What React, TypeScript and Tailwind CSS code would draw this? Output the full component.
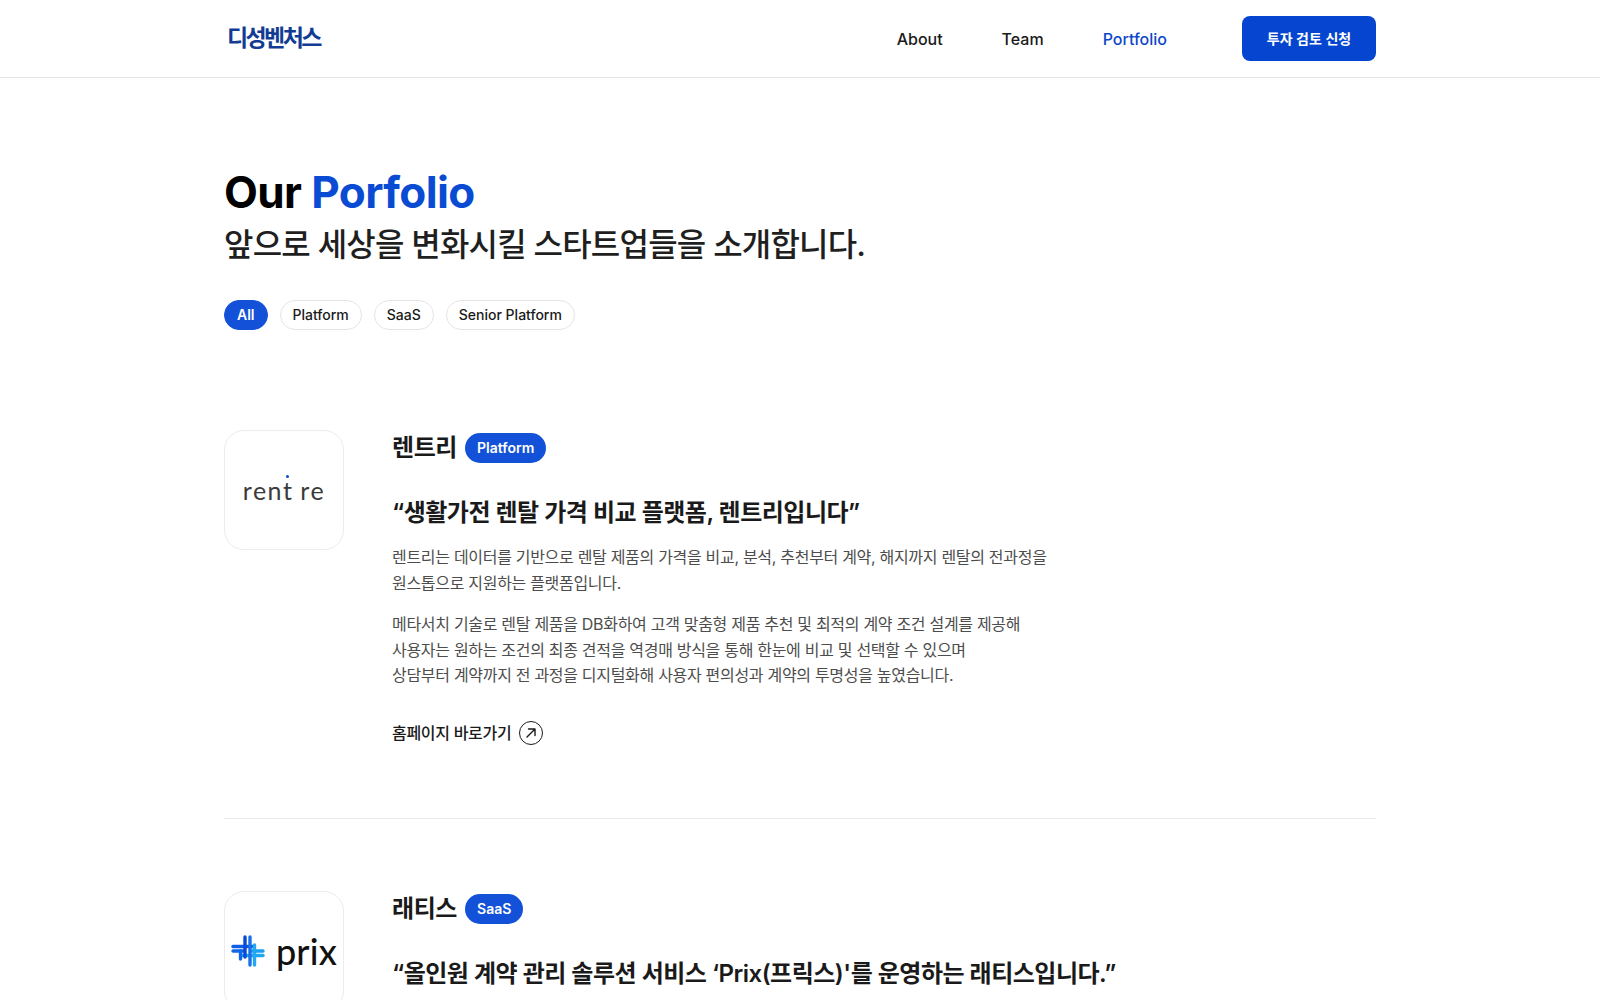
const FONT = "font-['Inter','Noto_Sans_CJK_KR','Noto_Sans',sans-serif]";

function Tag({ children }: { children: string }) {
  return (
    <span className="flex h-[30px] items-center rounded-full bg-[#1352d8] px-3 text-sm font-semibold text-white">
      {children}
    </span>
  );
}

function RentreLogo() {
  return (
    <div className="relative flex items-center text-[25px] leading-none tracking-[1.5px] text-[#3a3a3a] font-['Lato','sans-serif'] font-normal">
      <span>rent</span>
      <span className="relative ml-[7px]">re</span>
      <span className="absolute left-[43px] top-[-3px] size-[3px] rounded-full bg-[#0a46d0]" />
    </div>
  );
}

function PrixLogo() {
  return (
    <div className="flex items-center gap-[11px]">
      <svg width="34" height="32" viewBox="0 0 34 32" fill="none" strokeLinecap="round" strokeWidth="3.4">
        <defs>
          <linearGradient id="h" x1="0" x2="1" y1="0" y2="0">
            <stop offset="0" stopColor="#0a5be0" />
            <stop offset="1" stopColor="#22b8f5" />
          </linearGradient>
          <linearGradient id="v" x1="0" x2="0" y1="0" y2="1">
            <stop offset="0" stopColor="#0a49d6" />
            <stop offset="1" stopColor="#2aa6f2" />
          </linearGradient>
        </defs>
        <path d="M2 11.5H23" stroke="#0f5fe6" />
        <path d="M2 16H13" stroke="#1167ea" />
        <path d="M11 20.5H32" stroke="#1fa7f2" />
        <path d="M21 16H32" stroke="#1c9df0" />
        <path d="M14 2V22" stroke="#0a49d6" />
        <path d="M19 2V30" stroke="#1b6fe8" />
        <path d="M23.5 10V30" stroke="#22a8f3" />
        <path d="M9.5 16V24" stroke="#1167ea" />
      </svg>
      <span className="text-[36px] font-medium leading-none tracking-[0.2px] text-[#111] font-['Lato','sans-serif']">prix</span>
    </div>
  );
}

function Company({
  name,
  tag,
  logo,
  quote,
  paragraphs,
}: {
  name: string;
  tag: string;
  logo: React.ReactNode;
  quote: string;
  paragraphs: string[][];
}) {
  return (
    <article className="flex gap-12">
      <div className="flex size-[120px] shrink-0 items-center justify-center rounded-[20px] border border-[#ececec] bg-white">
        {logo}
      </div>
      <div className="min-w-0 flex-1">
        <div className="flex h-[36px] items-center gap-2">
          <h2 className="text-2xl font-bold tracking-[-0.4px] text-[#1a1a1a]">{name}</h2>
          <Tag>{tag}</Tag>
        </div>
        <p className="mt-[29px] h-[36px] text-[24px] font-semibold leading-[36px] tracking-[-0.5px] text-[#1a1a1a]">{quote}</p>
        <div className="mt-[14px] flex flex-col gap-4">
          {paragraphs.map((lines, i) => (
            <p key={i} className="text-base leading-[25.6px] tracking-[-0.3px] text-[#4d4d4d]">
              {lines.map((l) => (
                <span key={l} className="block">{l}</span>
              ))}
            </p>
          ))}
        </div>
        <a className="mt-[31px] flex h-[26px] items-center gap-2 text-base font-medium tracking-[-0.3px] text-[#1a1a1a]">
          홈페이지 바로가기
          <span className="flex size-6 items-center justify-center rounded-full border border-[#1a1a1a]">
            <svg width="12" height="12" viewBox="0 0 12 12" fill="none" stroke="#1a1a1a" strokeWidth="1.4" strokeLinecap="round" strokeLinejoin="round">
              <path d="M2 10L10 2M3.5 2H10V8.5" />
            </svg>
          </span>
        </a>
      </div>
    </article>
  );
}

export default function App() {
  const filters = ["All", "Platform", "SaaS", "Senior Platform"];
  return (
    <div className={`h-screen overflow-hidden bg-white ${FONT}`}>
      <header className="h-[78px] border-b border-[#e5e5e5]">
        <div className="mx-auto flex h-full max-w-[1152px] items-center">
          <span className="ml-[3px] text-[23px] font-bold leading-none tracking-[-2.6px] text-[#123c94]">디성벤처스</span>
          <nav className="ml-auto flex items-center gap-[59px] text-base font-medium text-[#1a1a1a]">
            <a>About</a>
            <a>Team</a>
            <a className="text-[#0d47c9]">Portfolio</a>
          </nav>
          <button className="ml-[75px] flex h-[45px] w-[134px] items-center justify-center rounded-lg bg-[#0545cf] text-sm font-semibold text-white">
            투자 검토 신청
          </button>
        </div>
      </header>
      <main className="mx-auto max-w-[1152px]">
        <section className="pt-[88px]">
          <h1 className="text-[44px] font-bold leading-[52px] tracking-[-0.6px] text-black">
            Our <span className="text-[#0a4bd4]">Porfolio</span>
          </h1>
          <p className="mt-[4px] text-[32px] font-medium leading-[46px] tracking-[-0.8px] text-[#1f1f1f]">
            앞으로 세상을 변화시킬 스타트업들을 소개합니다.
          </p>
          <div className="mt-[32px] flex gap-3">
            {filters.map((f, i) => (
              <button
                key={f}
                className={
                  i === 0
                    ? "h-[30px] rounded-full border border-[#1352d8] bg-[#1352d8] px-3 text-sm font-semibold text-white"
                    : "h-[30px] rounded-full border border-[#e5e5e5] bg-white px-3 text-sm font-medium text-[#1a1a1a]"
                }
              >
                {f}
              </button>
            ))}
          </div>
        </section>
        <section className="mt-[100px]">
          <Company
            name="렌트리"
            tag="Platform"
            logo={<RentreLogo />}
            quote="“생활가전 렌탈 가격 비교 플랫폼, 렌트리입니다”"
            paragraphs={[
              [
                "렌트리는 데이터를 기반으로 렌탈 제품의 가격을 비교, 분석, 추천부터 계약, 해지까지 렌탈의 전과정을",
                "원스톱으로 지원하는 플랫폼입니다.",
              ],
              [
                "메타서치 기술로 렌탈 제품을 DB화하여 고객 맞춤형 제품 추천 및 최적의 계약 조건 설계를 제공해",
                "사용자는 원하는 조건의 최종 견적을 역경매 방식을 통해 한눈에 비교 및 선택할 수 있으며",
                "상담부터 계약까지 전 과정을 디지털화해 사용자 편의성과 계약의 투명성을 높였습니다.",
              ],
            ]}
          />
          <div className="mt-[72px] mb-[72px] h-px bg-[#e8e8e8]" />
          <Company
            name="래티스"
            tag="SaaS"
            logo={<PrixLogo />}
            quote="“올인원 계약 관리 솔루션 서비스 ‘Prix(프릭스)'를 운영하는 래티스입니다.”"
            paragraphs={[]}
          />
        </section>
      </main>
    </div>
  );
}
